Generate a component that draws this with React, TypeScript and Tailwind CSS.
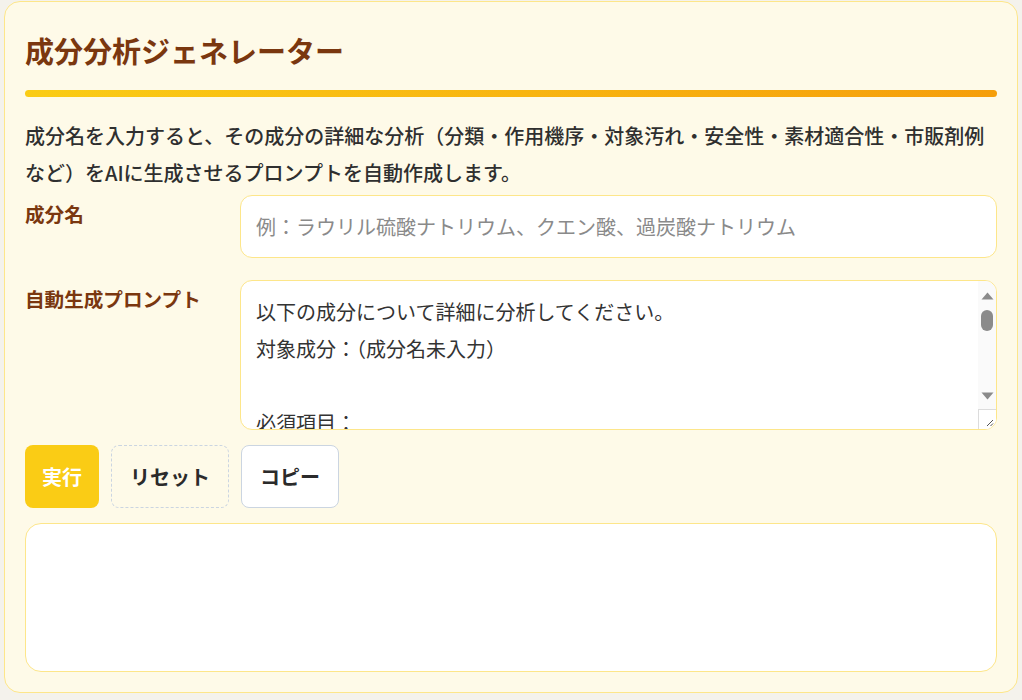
import React, { useState } from "react";

const initialPrompt = `以下の成分について詳細に分析してください。
対象成分：（成分名未入力）

必須項目：
1. 分類（界面活性剤・酸・アルカリ・酸化剤など）
2. 作用機序
3. 対象汚れ
4. 安全性（人体・環境への影響）
5. 素材適合性（使用できる素材・避けるべき素材）
6. 市販剤例`;

function FakeScrollbar() {
  return (
    <div className="absolute top-0 right-0 bottom-0 w-[18px] bg-[#fafafa]">
      <svg className="absolute left-[3px] top-[11px]" width="13" height="8" viewBox="0 0 13 8">
        <path d="M6.5 0.5 L12.5 7.5 L0.5 7.5 Z" fill="#8a8a8a" />
      </svg>
      <div className="absolute left-[3px] top-[29px] w-[12px] h-[21px] rounded-full bg-[#8b8b8b]" />
      <svg className="absolute left-[3px] top-[111px]" width="13" height="8" viewBox="0 0 13 8">
        <path d="M0.5 0.5 L12.5 0.5 L6.5 7.5 Z" fill="#8a8a8a" />
      </svg>
      <div className="absolute left-0 right-0 bottom-0 h-[20px] bg-white border-l border-t border-[#dcdcdc]">
        <svg className="absolute right-[2px] bottom-[2px]" width="9" height="9" viewBox="0 0 9 9">
          <path d="M8 2 L2 8 M8 5.5 L5.5 8" stroke="#555" strokeWidth="1" fill="none" />
        </svg>
      </div>
    </div>
  );
}

export default function App() {
  const [name, setName] = useState("");
  const [prompt, setPrompt] = useState(initialPrompt);
  return (
    <div
      className="min-h-[700px] bg-[#f4f2ec] pt-[1px] pl-[4px]"
      style={{ fontFamily: '"Noto Sans CJK JP", "Noto Sans", sans-serif' }}
    >
      <div className="w-[1014px] h-[692px] rounded-[16px] border border-[#fde68a] bg-[#fefae8] px-[20px] pt-[30px] pb-[20px] flex flex-col">
        <h1 className="text-[29px] leading-[36px] font-bold text-[#7a370f]">
          成分分析ジェネレーター
        </h1>
        <div className="mt-[22px] h-[7px] rounded-full bg-gradient-to-r from-[#facc15] to-[#f59e0b]" />
        <p className="mt-[20px] text-[20px] leading-[37px] font-medium text-[#2f2f2f]">
          成分名を入力すると、その成分の詳細な分析（分類・作用機序・対象汚れ・安全性・素材適合性・市販剤例など）をAIに生成させるプロンプトを自動作成します。
        </p>
        <div className="mt-[4px] grid grid-cols-[200px_1fr] gap-x-[15px] gap-y-[22px]">
          <label className="text-[19.6px] leading-[37px] font-bold text-[#7a370f]">成分名</label>
          <input
            value={name}
            onChange={(e) => setName(e.target.value)}
            placeholder="例：ラウリル硫酸ナトリウム、クエン酸、過炭酸ナトリウム"
            className="h-[63px] rounded-[12px] border border-[#fde68a] bg-white px-[15px] text-[20px] text-[#333] placeholder:text-[#8a8a8a] outline-none"
          />
          <label className="text-[19.6px] leading-[37px] font-bold text-[#7a370f]">自動生成プロンプト</label>
          <div className="relative h-[150px] rounded-[12px] border border-[#fde68a] bg-white overflow-hidden">
            <textarea
              value={prompt}
              onChange={(e) => setPrompt(e.target.value)}
              className="block w-full h-full resize-none overflow-hidden bg-transparent pl-[15px] pr-[30px] py-[12px] text-[20px] leading-[37px] text-[#333] outline-none"
            />
            <FakeScrollbar />
          </div>
        </div>
        <div className="mt-[15px] flex gap-[12px]">
          <button className="h-[63px] px-[17px] rounded-[8px] bg-[#facc15] text-white text-[20px] font-bold">
            実行
          </button>
          <button
            onClick={() => setName("")}
            className="h-[63px] px-[18px] rounded-[8px] border border-dashed border-[#cbd5e1] text-[#2b2b2b] text-[20px] font-bold"
          >
            リセット
          </button>
          <button className="h-[63px] px-[18px] rounded-[8px] border border-[#cbd5e1] bg-white text-[#2b2b2b] text-[20px] font-bold">
            コピー
          </button>
        </div>
        <div className="mt-[15px] flex-1 rounded-[16px] border border-[#fde68a] bg-white" />
      </div>
    </div>
  );
}
